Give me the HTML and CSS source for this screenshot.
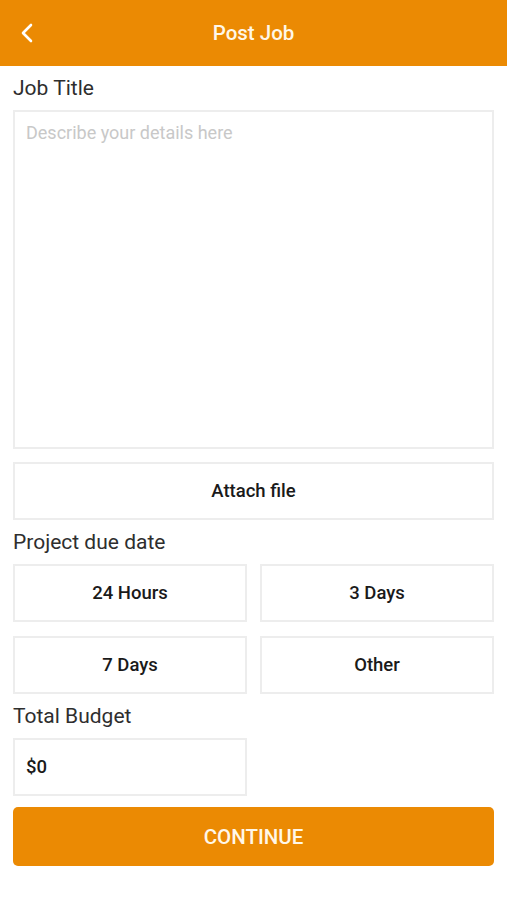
FILE: index.html
```html
<!DOCTYPE html>
<html>
<head>
<meta charset="utf-8">
<link rel="stylesheet" href="styles.css">
</head>
<body>
<header class="appbar">
  <button class="back" aria-label="Back">
    <svg width="14" height="20" viewBox="0 0 14 20"><path d="M11 2 L3 10 L11 18" fill="none" stroke="#fff" stroke-width="2.6" stroke-linecap="round" stroke-linejoin="round"/></svg>
  </button>
  <h1 class="title">Post Job</h1>
</header>
<main class="form">
  <div class="label">Job Title</div>
  <div class="box textarea"><span class="placeholder">Describe your details here</span></div>
  <div class="box btn attach">Attach file</div>
  <div class="label">Project due date</div>
  <div class="grid">
    <div class="box btn">24 Hours</div>
    <div class="box btn">3 Days</div>
    <div class="box btn">7 Days</div>
    <div class="box btn">Other</div>
  </div>
  <div class="label">Total Budget</div>
  <div class="grid budget">
    <div class="box input">$0</div>
  </div>
  <button class="continue">CONTINUE</button>
</main>
</body>
</html>
```
FILE: styles.css
```css
* { box-sizing: border-box; }
html, body { margin: 0; padding: 0; background: #fff; }
body { font-family: Roboto, "Noto Sans", sans-serif; color: #222; }

.appbar {
  height: 66px;
  background: #eb8a03;
  display: flex;
  align-items: center;
  justify-content: center;
  position: relative;
}
.back {
  position: absolute;
  left: 20px;
  top: 23px;
  background: none;
  border: 0;
  padding: 0;
  width: 16px;
  height: 20px;
  display: flex;
}
.title {
  margin: 0;
  color: #fff7e8;
  font-size: 20.5px;
  font-weight: 500;
}

.form {
  padding: 10px 13px 0 13px;
  display: flex;
  flex-direction: column;
}
.label {
  font-size: 21px;
  font-weight: 400;
  line-height: 24px;
  color: #2e2e2e;
  margin-bottom: 10px;
}
.box {
  border: 2px solid #ededed;
  background: #fff;
}
.textarea {
  height: 339px;
  padding: 9px 11px;
  margin-bottom: 13px;
}
.placeholder {
  color: #c8c8c8;
  font-size: 18px;
  line-height: 24px;
}
.btn {
  height: 58px;
  display: flex;
  align-items: center;
  justify-content: center;
  font-size: 18.5px;
  font-weight: 500;
  color: #1a1a1a;
}
.attach { margin-bottom: 10px; }
.grid {
  display: grid;
  grid-template-columns: 1fr 1fr;
  column-gap: 13px;
  row-gap: 14px;
  margin-bottom: 10px;
}
.budget { margin-bottom: 11px; }
.input {
  height: 58px;
  display: flex;
  align-items: center;
  padding-left: 11px;
  font-size: 18.5px;
  font-weight: 500;
  color: #1a1a1a;
}
.continue {
  height: 59px;
  border: 0;
  border-radius: 5px;
  background: #eb8a03;
  color: #fff7e8;
  font-family: Roboto, sans-serif;
  font-size: 20.5px;
  font-weight: 500;
}
```
